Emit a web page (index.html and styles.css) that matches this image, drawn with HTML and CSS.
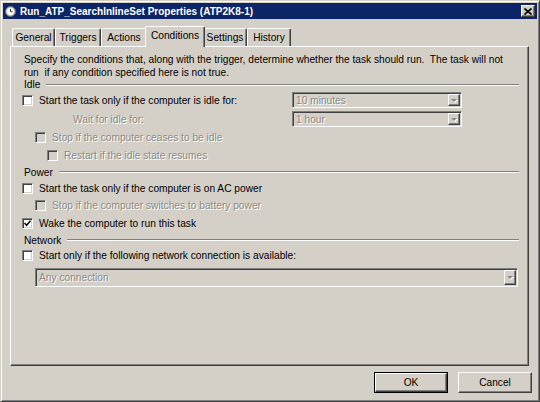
FILE: index.html
```html
<!DOCTYPE html>
<html>
<head>
<meta charset="utf-8">
<link rel="stylesheet" href="styles.css">
</head>
<body>
<div class="window">
  <div class="titlebar">
    <svg class="ticon" width="11" height="11" viewBox="0 0 11 11">
      <circle cx="5.5" cy="5.5" r="5" fill="#c8c8c8" stroke="#6d6d6d" stroke-width="1"/>
      <circle cx="5.5" cy="5.5" r="3.4" fill="#ffffff"/>
      <path d="M5.5 3 V5.7 H7.6" stroke="#333" stroke-width="1" fill="none"/>
    </svg>
    <span class="ttext">Run_ATP_SearchInlineSet Properties (ATP2K8-1)</span>
    <span class="close">
      <svg width="8" height="7" viewBox="0 0 8 7">
        <path d="M0.5 0.5 L7.5 6.5 M7.5 0.5 L0.5 6.5" stroke="#000" stroke-width="1.6"/>
      </svg>
    </span>
  </div>

  <div class="tabs">
    <div class="tab w-general">General</div>
    <div class="tab w-triggers">Triggers</div>
    <div class="tab w-actions">Actions</div>
    <div class="tab tab-active w-conditions">Conditions</div>
    <div class="tab w-settings">Settings</div>
    <div class="tab w-history">History</div>
  </div>

  <div class="panel">
    <div class="desc">
      <div>Specify the conditions that, along with the trigger, determine whether the task should run.&nbsp; The task will not</div>
      <div>run&nbsp; if any condition specified here is not true.</div>
    </div>

    <div class="section h-idle"><span>Idle</span><span class="etch"></span></div>

    <div class="row r20">
      <div class="labelcol">
        <span class="cb lvl0"></span><span>Start the task only if the computer is idle for:</span>
      </div>
      <div class="combo disabled c1"><span class="ctext">10 minutes</span><span class="arrow"><span class="tri"></span></span></div>
    </div>
    <div class="row r18">
      <div class="labelcol waitlabel"><span class="dis">Wait for idle for:</span></div>
      <div class="combo disabled c1"><span class="ctext">1 hour</span><span class="arrow"><span class="tri"></span></span></div>
    </div>
    <div class="row r18">
      <span class="cb cb-dis lvl1"></span><span class="dis">Stop if the computer ceases to be idle</span>
    </div>
    <div class="row r18">
      <span class="cb cb-dis lvl2"></span><span class="dis">Restart if the idle state resumes</span>
    </div>

    <div class="section h16"><span>Power</span><span class="etch"></span></div>
    <div class="row r16">
      <span class="cb lvl0"></span><span>Start the task only if the computer is on AC power</span>
    </div>
    <div class="row r18">
      <span class="cb cb-dis lvl1"></span><span class="dis">Stop if the computer switches to battery power</span>
    </div>
    <div class="row r18">
      <span class="cb lvl0"><svg width="7" height="7" viewBox="0 0 7 7"><path d="M0.5 3 L2.6 5.3 L6.5 0.8" stroke="#000" stroke-width="1.5" fill="none"/></svg></span><span>Wake the computer to run this task</span>
    </div>

    <div class="section h16"><span>Network</span><span class="etch"></span></div>
    <div class="row r15">
      <span class="cb lvl0"></span><span>Start only if the following network connection is available:</span>
    </div>
    <div class="combo disabled c2"><span class="ctext">Any connection</span><span class="arrow"><span class="tri"></span></span></div>
  </div>

  <div class="buttons">
    <div class="btn btn-default"><span class="btn-in">OK</span></div>
    <div class="btn"><span class="btn-in">Cancel</span></div>
  </div>
</div>
</body>
</html>
```

FILE: styles.css
```css
html, body {
  margin: 0;
  padding: 0;
  background: #d4d0c8;
}

body {
  font-family: "Liberation Sans", Arial, sans-serif;
  font-size: 10.2px;
  color: #000;
}

.window {
  width: 540px;
  height: 402px;
  box-sizing: border-box;
  background: #d4d0c8;
  border: 1px solid;
  border-color: #d4d0c8 #404040 #404040 #d4d0c8;
  box-shadow: inset 1px 1px 0 #fff, inset -1px -1px 0 #808080;
  padding: 2px;
  display: flex;
  flex-direction: column;
}

.titlebar {
  height: 16px;
  background: #0c2567;
  display: flex;
  align-items: center;
  padding-left: 2px;
  padding-right: 2px;
  flex: 0 0 auto;
}

.ticon {
  flex: 0 0 auto;
}

.ttext {
  color: #fff;
  font-weight: bold;
  font-size: 10px;
  margin-left: 4px;
  white-space: nowrap;
}

.close {
  margin-left: auto;
  width: 14px;
  height: 12px;
  box-sizing: border-box;
  background: #d4d0c8;
  border: 1px solid;
  border-color: #fff #404040 #404040 #fff;
  box-shadow: inset -1px -1px 0 #808080;
  display: flex;
  align-items: center;
  justify-content: center;
}

.close svg {
  display: block;
}

/* Tabs */
.tabs {
  display: flex;
  align-items: flex-end;
  height: 20px;
  margin-top: 7px;
  padding-left: 9px;
  position: relative;
  z-index: 2;
  flex: 0 0 auto;
}

.tab {
  height: 18px;
  box-sizing: border-box;
  border-left: 1px solid #fff;
  border-top: 1px solid #fff;
  border-right: 1px solid #404040;
  box-shadow: inset -1px 0 0 #808080;
  border-radius: 2px 2px 0 0;
  display: flex;
  align-items: center;
  justify-content: center;
  white-space: nowrap;
  background: #d4d0c8;
}

.tab-active {
  height: 21px;
  margin: 0 -2px -1px -2px;
  padding-bottom: 3px;
  position: relative;
  z-index: 3;
}

.w-general { width: 43px; }
.w-triggers { width: 46px; }
.w-actions { width: 46px; }
.w-conditions { width: 60px; }
.w-settings { width: 44px; }
.w-history { width: 44px; }

/* Panel */
.panel {
  height: 320px;
  box-sizing: border-box;
  margin: 0 8px 0 7px;
  border: 1px solid;
  border-color: #fff #404040 #404040 #fff;
  box-shadow: inset -1px -1px 0 #808080;
  padding: 6px 9px 0 13px;
  flex: 0 0 auto;
}

.desc {
  line-height: 13px;
  white-space: nowrap;
}

.section {
  display: flex;
  align-items: center;
  white-space: nowrap;
}

.h-idle { height: 11px; }
.h16 { height: 16px; }

.etch {
  flex: 1 1 auto;
  height: 0;
  border-top: 1px solid #808080;
  border-bottom: 1px solid #fff;
  margin-left: 6px;
}

.row {
  display: flex;
  align-items: center;
  white-space: nowrap;
}

.r20 { height: 20px; }
.r18 { height: 18px; }
.r16 { height: 16px; }
.r15 { height: 15px; }

.labelcol {
  flex: 0 0 268px;
  display: flex;
  align-items: center;
}

.waitlabel {
  padding-left: 49px;
  box-sizing: border-box;
}

.dis {
  color: #8c8984;
  text-shadow: 1px 1px 0 #fff;
}

/* Checkbox */
.cb {
  width: 11px;
  height: 11px;
  box-sizing: border-box;
  flex: 0 0 auto;
  background: #fff;
  border: 1px solid;
  border-color: #808080 #fff #fff #808080;
  box-shadow: inset 1px 1px 0 #404040, inset -1px -1px 0 #d4d0c8;
  margin-right: 6px;
  display: flex;
  align-items: center;
  justify-content: center;
}

.cb svg {
  display: block;
}

.cb-dis {
  background: #d4d0c8;
}

.lvl0 { margin-left: -2px; }
.lvl1 { margin-left: 11px; }
.lvl2 { margin-left: 23px; }

/* Combo */
.combo {
  height: 16px;
  box-sizing: border-box;
  border: 1px solid;
  border-color: #808080 #fff #fff #808080;
  box-shadow: inset 1px 1px 0 #404040, inset -1px -1px 0 #d4d0c8;
  background: #d4d0c8;
  display: flex;
  align-items: stretch;
  padding: 1px;
}

.c1 {
  width: 170px;
}

.c2 {
  width: 483px;
  height: 19px;
  margin-left: 11px;
  margin-top: 5px;
}

.ctext {
  flex: 1 1 auto;
  display: flex;
  align-items: center;
  padding-left: 2px;
  color: #8c8984;
  text-shadow: 1px 1px 0 #fff;
  white-space: nowrap;
}

.arrow {
  width: 12px;
  flex: 0 0 auto;
  box-sizing: border-box;
  border: 1px solid;
  border-color: #fff #404040 #404040 #fff;
  box-shadow: inset -1px -1px 0 #808080;
  display: flex;
  align-items: center;
  justify-content: center;
}

.tri {
  width: 0;
  height: 0;
  border-left: 3px solid transparent;
  border-right: 3px solid transparent;
  border-top: 3px solid #8c8984;
  filter: drop-shadow(1px 1px 0 #fff);
}

/* Buttons */
.buttons {
  display: flex;
  justify-content: flex-end;
  gap: 10px;
  margin-top: 6px;
  padding-right: 5px;
  flex: 0 0 auto;
}

.btn {
  width: 74px;
  height: 21px;
  box-sizing: border-box;
  border: 1px solid;
  border-color: #fff #404040 #404040 #fff;
  box-shadow: inset -1px -1px 0 #808080;
  display: flex;
  align-items: center;
  justify-content: center;
}

.btn-default {
  border: 1px solid #000;
  box-shadow: none;
  padding: 0;
}

.btn-default .btn-in {
  width: 100%;
  height: 100%;
  box-sizing: border-box;
  border: 1px solid;
  border-color: #fff #404040 #404040 #fff;
  box-shadow: inset -1px -1px 0 #808080;
  display: flex;
  align-items: center;
  justify-content: center;
}
```
